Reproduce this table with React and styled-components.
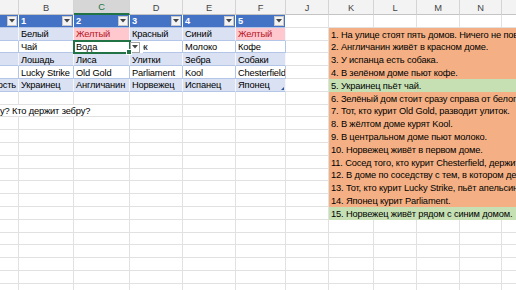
import React from 'react';
import styled, {createGlobalStyle, css} from 'styled-components';

const GlobalStyle = createGlobalStyle`
  html, body {
    margin: 0;
    padding: 0;
    background: #fff;
    overflow: hidden;
  }
  body {
    font-family: 'Liberation Sans', Arial, sans-serif;
  }
`;

// visible columns; G..I are hidden in the sheet, A is cut by the window edge
const COLUMNS = [
  {key: 'A', width: 19, label: ''},
  {key: 'B', width: 55, label: 'B'},
  {key: 'C', width: 56, label: 'C', active: true},
  {key: 'D', width: 53, label: 'D'},
  {key: 'E', width: 53, label: 'E'},
  {key: 'F', width: 50, label: 'F'},
  {key: 'J', width: 43, label: 'J'},
  {key: 'K', width: 45, label: 'K'},
  {key: 'L', width: 43, label: 'L'},
  {key: 'M', width: 43, label: 'M'},
  {key: 'N', width: 42, label: 'N'},
  {key: 'O', width: 43, label: 'O'},
];

const ROW_COUNT = 22;

const TABLE_HEAD = ['1', '2', '3', '4', '5'];

const TABLE_ROWS = [
  {lead: '', cells: ['Белый', 'Желтый', 'Красный', 'Синий', 'Желтый'], pink: [1, 4]},
  {lead: '', cells: ['Чай', 'Вода', 'Сок', 'Молоко', 'Кофе'], selected: 1},
  {lead: '', cells: ['Лошадь', 'Лиса', 'Улитки', 'Зебра', 'Собаки']},
  {lead: '', cells: ['Lucky Strike', 'Old Gold', 'Parliament', 'Kool', 'Chesterfield']},
  {lead: 'Национальность', cells: ['Украинец', 'Англичанин', 'Норвежец', 'Испанец', 'Японец']},
];

const NOTES = [
  {text: '1. На улице стоят пять домов. Ничего не повторяется.'},
  {text: '2. Англичанин живёт в красном доме.'},
  {text: '3. У испанца есть собака.'},
  {text: '4. В зелёном доме пьют кофе.'},
  {text: '5. Украинец пьёт чай.', done: true},
  {text: '6. Зелёный дом стоит сразу справа от белого дома.'},
  {text: '7. Тот, кто курит Old Gold, разводит улиток.'},
  {text: '8. В жёлтом доме курят Kool.'},
  {text: '9. В центральном доме пьют молоко.'},
  {text: '10. Норвежец живёт в первом доме.'},
  {text: '11. Сосед того, кто курит Chesterfield, держит лису.'},
  {text: '12. В доме по соседству с тем, в котором держат лошадь, курят Kool.'},
  {text: '13. Тот, кто курит Lucky Strike, пьёт апельсиновый сок.'},
  {text: '14. Японец курит Parliament.'},
  {text: '15. Норвежец живёт рядом с синим домом.', done: true},
];

const Sheet = styled.div`
  display: grid;
  grid-template-columns: ${COLUMNS.map(c => `${c.width}px`).join(' ')};
  grid-template-rows: 15px repeat(${ROW_COUNT}, 12.8px);
  width: max-content;
  font-size: 9.3px;
  letter-spacing: -0.15px;
  color: #000;
`;

const ColumnHeader = styled.div`
  box-sizing: border-box;
  display: flex;
  align-items: center;
  justify-content: center;
  padding-top: 1px;
  background: ${p => (p.$active ? '#d6d6d6' : '#f3f3f3')};
  color: ${p => (p.$active ? '#217346' : '#444')};
  border-right: 1px solid #d4d4d4;
  border-bottom: ${p => (p.$active ? '2px solid #217346' : '1px solid #c4c4c4')};
  letter-spacing: 0;
`;

const Cell = styled.div`
  position: relative;
  box-sizing: border-box;
  display: flex;
  align-items: center;
  min-width: 0;
  padding: 1px 2px 0;
  overflow: hidden;
  white-space: nowrap;
  background: #fff;
  border-right: 1px solid #e1e1e1;
  border-bottom: 1px solid #e1e1e1;
  grid-column: ${p => (p.$span ? `span ${p.$span}` : 'auto')};
`;

const TableCell = styled(Cell)`
  background: ${p => (p.$pink ? '#ffc7ce' : p.$band ? '#d9e1f2' : '#fff')};
  color: ${p => (p.$pink ? '#b3131c' : '#000')};
  border-right-color: ${p => (p.$band ? '#f4f6fb' : '#b4c6e7')};
  border-bottom-color: #b4c6e7;
  justify-content: ${p => (p.$lead ? 'flex-end' : 'flex-start')};

  ${p =>
    p.$corner &&
    css`
      &::after {
        content: '';
        position: absolute;
        right: 1px;
        bottom: 1px;
        border-style: solid;
        border-width: 0 0 3px 3px;
        border-color: transparent transparent #2f5597 transparent;
      }
    `}

  ${p =>
    p.$selected &&
    css`
      overflow: visible;
      z-index: 2;
      outline: 2px solid #217346;
      outline-offset: -1px;

      &::after {
        content: '';
        position: absolute;
        right: -3px;
        bottom: -3px;
        width: 4px;
        height: 4px;
        background: #217346;
        border: 1px solid #fff;
      }
    `}
`;

const HeadCell = styled(Cell)`
  background: #4472c4;
  color: #fff;
  font-weight: bold;
  justify-content: ${p => (p.$lead ? 'flex-end' : 'space-between')};
  gap: 8px;
  padding-right: 1px;
  border-right-color: #fff;
  border-bottom-color: #b4c6e7;
`;

const FilterButton = styled.span`
  box-sizing: border-box;
  flex-shrink: 0;
  display: flex;
  align-items: center;
  justify-content: center;
  width: 10px;
  height: 10px;
  background: #f4f4f4;
  border: 1px solid #c8c8c8;
`;

// data validation arrow that sits over the neighbouring cell
const ValidationButton = styled.span`
  position: absolute;
  top: 1px;
  left: calc(100% + 1px);
  box-sizing: border-box;
  display: flex;
  align-items: center;
  justify-content: center;
  width: 10px;
  height: 11px;
  background: #fff;
  border: 1px solid #a6a6a6;
  box-shadow: 3px 0 0 #fff;
`;

const Overflow = styled(Cell)`
  padding-left: 0;
`;

const NoteCell = styled.div`
  grid-column: span 5;
  display: flex;
  align-items: center;
  padding: 1px 2px 0;
  white-space: nowrap;
  overflow: hidden;
  background: ${p => (p.$done ? '#c6e0b4' : '#f4b084')};
`;

const Arrow = () => (
  <svg width="6" height="4" viewBox="0 0 6 4">
    <path d="M0 0h6L3 3.5z" fill="#444" />
  </svg>
);

const plainCells = (count, prefix) =>
  Array.from({length: count}, (_, i) => <Cell key={`${prefix}-${i}`} />);

export default function App() {
  const rows = [];

  // row 1: table header
  rows.push(
    <HeadCell key="h-a" $lead>
      <span>Дом</span>
      <FilterButton>
        <Arrow />
      </FilterButton>
    </HeadCell>,
    ...TABLE_HEAD.map(label => (
      <HeadCell key={`h-${label}`}>
        <span>{label}</span>
        <FilterButton>
          <Arrow />
        </FilterButton>
      </HeadCell>
    )),
    ...plainCells(6, 'r1'),
  );

  for (let r = 0; r < ROW_COUNT - 1; r++) {
    const note = NOTES[r];
    const table = TABLE_ROWS[r];
    const cells = [];

    if (table) {
      const band = r % 2 === 0;
      const last = r === TABLE_ROWS.length - 1;
      cells.push(
        <TableCell key="lead" $band={band} $lead>
          {table.lead}
        </TableCell>,
      );
      table.cells.forEach((value, i) => {
        const selected = table.selected === i;
        cells.push(
          <TableCell
            key={i}
            $band={band}
            $pink={table.pink && table.pink.includes(i)}
            $selected={selected}
            $corner={last && i === table.cells.length - 1}
          >
            {value}
            {selected && (
              <ValidationButton>
                <Arrow />
              </ValidationButton>
            )}
          </TableCell>,
        );
      });
      cells.push(<Cell key="j" />);
    } else if (r === TABLE_ROWS.length + 1) {
      cells.push(
        <Overflow key="q" $span={3}>
          у? Кто держит зебру?
        </Overflow>,
        ...plainCells(4, `r${r}`),
      );
    } else {
      cells.push(...plainCells(7, `r${r}`));
    }

    if (note) {
      cells.push(
        <NoteCell key="note" $done={note.done}>
          {note.text}
        </NoteCell>,
      );
    } else {
      cells.push(...plainCells(5, `n${r}`));
    }

    rows.push(<React.Fragment key={`row-${r}`}>{cells}</React.Fragment>);
  }

  return (
    <>
      <GlobalStyle />
      <Sheet>
        {COLUMNS.map(col => (
          <ColumnHeader key={col.key} $active={col.active}>
            {col.label}
          </ColumnHeader>
        ))}
        {rows}
      </Sheet>
    </>
  );
}
